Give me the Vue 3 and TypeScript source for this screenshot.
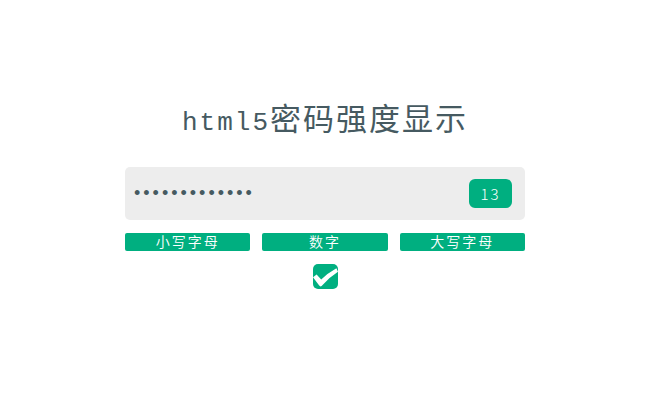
<script setup lang="ts">
import { computed, ref } from 'vue'

const password = ref<string>('abcdef123GHIJ')
const accepted = ref<boolean>(true)

const rules = [
  { label: '小写字母', pattern: /[a-z]/ },
  { label: '数字', pattern: /[0-9]/ },
  { label: '大写字母', pattern: /[A-Z]/ },
]

const results = computed(() =>
  rules.map((rule) => ({ label: rule.label, met: rule.pattern.test(password.value) })),
)
</script>

<template>
  <main class="page">
    <h1 class="title"><span class="latin">html5</span>密码强度显示</h1>
    <form class="form" @submit.prevent>
      <div class="field">
        <input
          v-model="password"
          class="password"
          type="password"
          autocomplete="off"
          aria-label="密码"
        />
        <output class="count">{{ password.length }}</output>
      </div>
      <ul class="rules">
        <li v-for="rule in results" :key="rule.label" class="rule" :class="{ met: rule.met }">
          {{ rule.label }}
        </li>
      </ul>
      <label class="check">
        <input v-model="accepted" class="box" type="checkbox" aria-label="密码强度" />
        <svg v-if="accepted" class="tick" viewBox="0 0 25 25" aria-hidden="true">
          <path d="M0 13.2 L3.6 10.6 L8.2 15.4 Q14.5 9.2 23.4 4.2 L25 7.8 Q15.8 13.6 8.6 22 Q7.4 23 6.2 21.6 Z" />
        </svg>
      </label>
    </form>
  </main>
</template>

<style>
body {
  background: #fff;
}
</style>

<style scoped>
.page {
  display: flex;
  flex-direction: column;
  align-items: center;
  padding: 95px 24px 24px;
  color: #465a61;
  font-family: 'Noto Sans CJK SC', sans-serif;
  letter-spacing: 2px;
}

.title {
  margin: 0 0 28px;
  font-size: 31px;
  font-weight: 400;
  line-height: 44px;
}

.latin {
  font-family: 'Liberation Mono', monospace;
  font-size: 26px;
  line-height: 1;
}

.form {
  display: flex;
  flex-direction: column;
  align-items: center;
  width: 100%;
  max-width: 400px;
}

.field {
  display: flex;
  align-items: center;
  box-sizing: border-box;
  width: 100%;
  padding: 12px 13px 12px 9px;
  border-radius: 5px;
  background: #ededed;
}

.password {
  flex: 1;
  min-width: 0;
  height: 29px;
  padding: 0;
  border: 0;
  outline: 0;
  background: transparent;
  color: inherit;
  font-family: 'Liberation Sans', sans-serif;
  font-size: 18px;
  letter-spacing: 3px;
}

.count {
  box-sizing: border-box;
  min-width: 43px;
  border-radius: 6px;
  background: #00af80;
  color: #fff;
  font-size: 15px;
  font-weight: 300;
  line-height: 29px;
  text-align: center;
}

.rules {
  display: grid;
  grid-template-columns: repeat(3, 1fr);
  gap: 12px;
  width: 100%;
  margin: 13px 0;
  padding: 0;
  list-style: none;
}

.rule {
  padding-bottom: 2px;
  border-radius: 2px;
  background: #ededed;
  font-size: 14px;
  font-weight: 350;
  line-height: 16px;
  text-align: center;
}

.rule.met {
  background: #00af80;
  color: #fff;
}

.check {
  display: grid;
  cursor: pointer;
}

.box {
  grid-area: 1 / 1;
  width: 25px;
  height: 25px;
  margin: 0;
  border-radius: 5px;
  background: #ededed;
  appearance: none;
}

.box:checked {
  background: #00af80;
}

.tick {
  grid-area: 1 / 1;
  width: 25px;
  height: 25px;
  fill: #fff;
  pointer-events: none;
}
</style>
